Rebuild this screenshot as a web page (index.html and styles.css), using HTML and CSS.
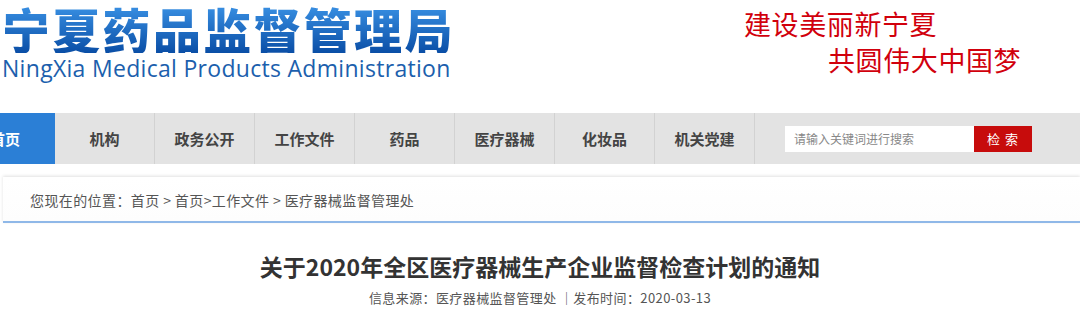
FILE: index.html
```html
<!DOCTYPE html>
<html lang="zh-CN">
<head>
  <meta charset="UTF-8" />
  <title>关于2020年全区医疗器械生产企业监督检查计划的通知</title>
  <link rel="stylesheet" href="styles.css">
</head>
<body>
  <header class="top">
    <div class="logo">
      <h1>宁夏药品监督管理局</h1>
      <p>NingXia Medical Products Administration</p>
    </div>
    <div class="slogan">
      <span class="line1">建设美丽新宁夏</span>
      <span class="line2">共圆伟大中国梦</span>
    </div>
  </header>

  <nav class="nav">
    <a class="active" href="#">首页</a>
    <a href="#">机构</a>
    <a href="#">政务公开</a>
    <a href="#">工作文件</a>
    <a href="#">药品</a>
    <a href="#">医疗器械</a>
    <a href="#">化妆品</a>
    <a href="#">机关党建</a>
    <form class="search" onsubmit="return false">
      <input type="text" placeholder="请输入关键词进行搜索" />
      <button type="submit">检 索</button>
    </form>
  </nav>

  <div class="crumbs">
    您现在的位置：首页 &gt; 首页&gt;工作文件 &gt; 医疗器械监督管理处
  </div>

  <article class="article">
    <h2>关于2020年全区医疗器械生产企业监督检查计划的通知</h2>
    <p class="meta">信息来源：医疗器械监督管理处 ｜发布时间：2020-03-13</p>
  </article>
</body>
</html>
```

FILE: styles.css
```css
* { box-sizing: border-box; margin: 0; padding: 0; }

body {
  background: #fff;
  color: #333;
  font-family: "Noto Sans CJK SC", "Noto Sans", sans-serif;
  width: 1080px;
  overflow: hidden;
}

.top {
  display: flex;
  height: 113px;
}

.logo {
  padding: 3px 0 0 2px;
  width: 740px;
}

.logo h1 {
  font-size: 48px;
  font-weight: 900;
  line-height: 50px;
  letter-spacing: 2.3px;
  background: linear-gradient(#3b93e6, #0a4ea6);
  -webkit-background-clip: text;
  background-clip: text;
  color: transparent;
}

.logo p {
  font-family: "Open Sans", "Noto Sans", sans-serif;
  font-size: 23px;
  line-height: 30px;
  color: #1c5fad;
  letter-spacing: 0.3px;
}

.slogan {
  display: flex;
  flex-direction: column;
  padding: 6px 0 0 4px;
  color: #d1000c;
  font-size: 27px;
  line-height: 36px;
  letter-spacing: 0.6px;
}

.slogan .line2 {
  padding-left: 84px;
}

.nav {
  display: flex;
  align-items: center;
  height: 51px;
  margin-left: -45px;
  background: #e3e3e3;
}

.nav a {
  width: 100px;
  height: 100%;
  line-height: 51px;
  text-align: center;
  font-size: 15px;
  font-weight: 700;
  color: #444;
  text-decoration: none;
  border-right: 1px solid #d2d2d2;
}

.nav a.active {
  background: #2b7fd6;
  color: #fff;
  border-right: none;
}

.search {
  display: flex;
  margin-left: 30px;
}

.search input {
  width: 189px;
  height: 26px;
  border: none;
  outline: none;
  padding: 0 9px;
  font-family: inherit;
  font-size: 12px;
  color: #333;
  background: #fff;
}

.search input::placeholder {
  color: #888;
}

.search button {
  width: 58px;
  height: 26px;
  border: none;
  background: #c70c0c;
  color: #fff;
  font-family: inherit;
  font-size: 13px;
  letter-spacing: 1px;
}

.crumbs {
  margin: 13px 0 0 3px;
  height: 46px;
  line-height: 46px;
  padding-left: 27px;
  font-size: 14px;
  letter-spacing: 0.4px;
  color: #555;
  background: linear-gradient(#fff, #fdfdfd);
  box-shadow: 0 -1px 3px rgba(0, 0, 0, 0.12);
  border-bottom: 2px solid #8fb8e8;
}

.article {
  text-align: center;
  padding-top: 26px;
}

.article h2 {
  font-size: 23px;
  font-weight: 700;
  color: #333;
  line-height: 34px;
}

.article .meta {
  margin-top: 5px;
  font-size: 13px;
  letter-spacing: 0.4px;
  color: #555;
}
```
